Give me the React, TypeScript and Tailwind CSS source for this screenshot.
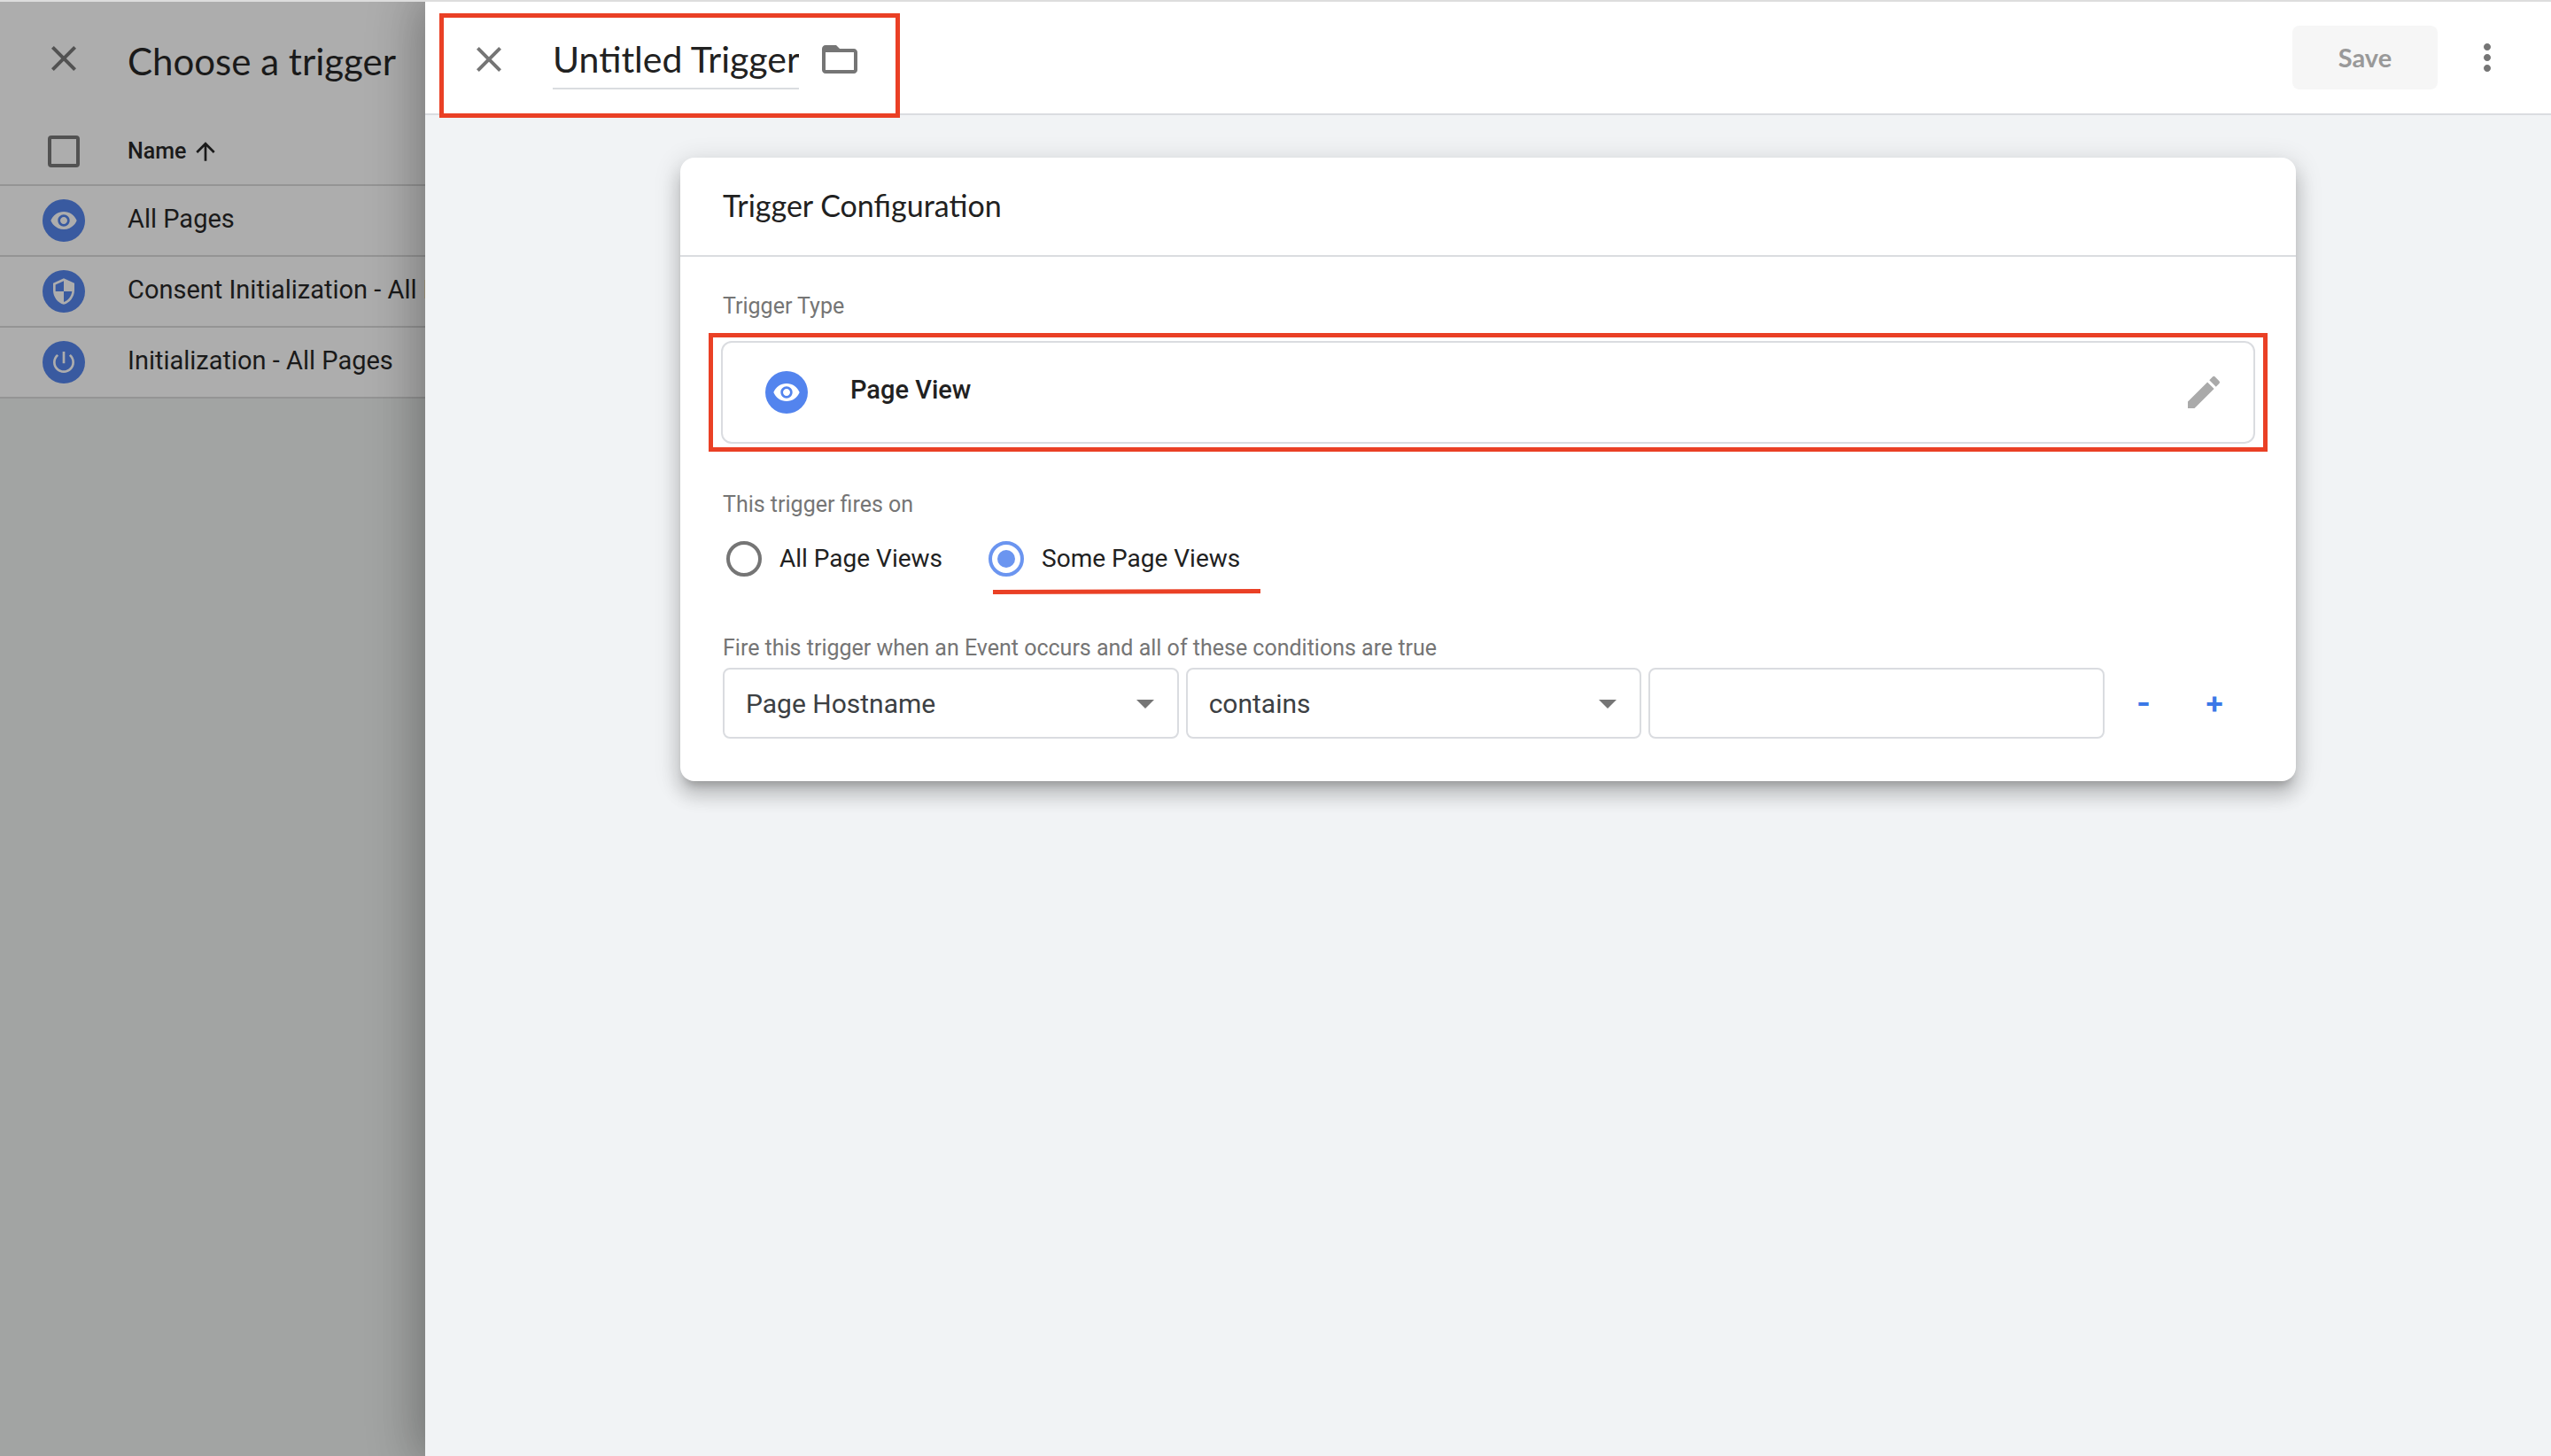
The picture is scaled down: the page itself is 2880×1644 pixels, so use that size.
import React from "react";

const GOOGLE = "font-['Google_Sans','Lato',sans-serif]";

function Icon({ d, className }: { d: string; className: string }) {
  return (
    <svg viewBox="0 0 24 24" fill="currentColor" aria-hidden="true" className={className}>
      <path d={d} />
    </svg>
  );
}

const CLOSE =
  "M19 6.41 17.59 5 12 10.59 6.41 5 5 6.41 10.59 12 5 17.59 6.41 19 12 13.41 17.59 19 19 17.59 13.41 12z";
const EYE =
  "M12 4.5C7 4.5 2.73 7.61 1 12c1.73 4.39 6 7.5 11 7.5s9.27-3.11 11-7.5c-1.73-4.39-6-7.5-11-7.5zM12 17c-2.76 0-5-2.24-5-5s2.24-5 5-5 5 2.24 5 5-2.24 5-5 5zm0-8c-1.66 0-3 1.34-3 3s1.34 3 3 3 3-1.34 3-3-1.34-3-3-3z";
const SHIELD =
  "M12 1 3 5v6c0 5.55 3.84 10.74 9 12 5.16-1.26 9-6.45 9-12V5l-9-4zm0 10.99h7c-.53 4.12-3.28 7.79-7 8.94V12H5V6.3l7-3.11v8.8z";
const POWER =
  "M13 3h-2v10h2V3zm4.83 2.17-1.42 1.42C17.99 7.86 19 9.81 19 12c0 3.87-3.13 7-7 7s-7-3.13-7-7c0-2.19 1.01-4.14 2.58-5.42L6.17 5.17C4.23 6.82 3 9.26 3 12c0 4.97 4.03 9 9 9s9-4.03 9-9c0-2.74-1.23-5.18-3.17-6.83z";
const FOLDER =
  "M20 6h-8l-2-2H4c-1.1 0-1.99.9-1.99 2L2 18c0 1.1.9 2 2 2h16c1.1 0 2-.9 2-2V8c0-1.1-.9-2-2-2zm0 12H4V8h16v10z";
const PENCIL =
  "M3 17.25V21h3.75L17.81 9.94l-3.75-3.75L3 17.25zM20.71 7.04a.996.996 0 0 0 0-1.41l-2.34-2.34a.996.996 0 0 0-1.41 0l-1.83 1.83 3.75 3.75 1.83-1.83z";
const DOTS =
  "M12 8c1.1 0 2-.9 2-2s-.9-2-2-2-2 .9-2 2 .9 2 2 2zm0 2c-1.1 0-2 .9-2 2s.9 2 2 2 2-.9 2-2-.9-2-2-2zm0 6c-1.1 0-2 .9-2 2s.9 2 2 2 2-.9 2-2-.9-2-2-2z";
const ARROW_UP = "M4 12l1.41 1.41L11 7.83V20h2V7.83l5.58 5.59L20 12l-8-8-8 8z";

const triggers = [
  { name: "All Pages", icon: EYE },
  { name: "Consent Initialization - All Pages", icon: SHIELD },
  { name: "Initialization - All Pages", icon: POWER },
];

function TriggerList() {
  return (
    <aside className="w-[480px] shrink-0 overflow-hidden bg-[#a2a4a3] text-[#1a1a1a]">
      <div className="bg-[#adadad]">
        <div className="flex h-[127px] items-center gap-12 pl-12">
          <button type="button" aria-label="Close list" className="text-[#525252]">
            <Icon d={CLOSE} className="size-12" />
          </button>
          <h2 className={`${GOOGLE} pt-1.5 text-[42px] leading-12 whitespace-nowrap`}>Choose a trigger</h2>
        </div>
        <table className="w-full border-collapse text-left">
          <thead>
            <tr className="h-20 border-b-2 border-[#949494]">
              <th className="w-24 pt-1 pl-12">
                <input
                  type="checkbox"
                  aria-label="Select all triggers"
                  className="mx-[6px] block size-9 appearance-none rounded-sm border-4 border-[#525252]"
                />
              </th>
              <th className="pt-1 pl-12 text-[25px] font-medium">
                <button type="button" className="flex items-center gap-1.5">
                  Name
                  <Icon d={ARROW_UP} className="size-8" />
                </button>
              </th>
            </tr>
          </thead>
          <tbody>
            {triggers.map((t) => (
              <tr key={t.name} className="h-20 border-b-2 border-[#949494]">
                <td className="w-24 pl-12">
                  <span className="flex size-12 items-center justify-center rounded-full bg-[#395aa0] text-[#adadad]">
                    <Icon d={t.icon} className="size-8" />
                  </span>
                </td>
                <td className="max-w-0 pb-1 pl-12 text-[29px] leading-8 whitespace-nowrap">{t.name}</td>
              </tr>
            ))}
          </tbody>
        </table>
      </div>
    </aside>
  );
}

function EditorHeader() {
  return (
    <header className="flex h-32 items-center justify-between border-b-2 border-[#dadce0] bg-white pr-12">
      <div className="relative mt-1 flex items-center pl-12">
        <button type="button" aria-label="Close editor" className="text-[#757575]">
          <Icon d={CLOSE} className="size-12" />
        </button>
        <input
          aria-label="Trigger name"
          defaultValue="Untitled Trigger"
          className={`${GOOGLE} ml-12 h-[68px] w-[278px] border-b-2 border-[#dadce0] bg-transparent text-[41px] text-[#212121] outline-none`}
        />
        <button type="button" aria-label="Choose folder" className="ml-[22px] text-[#757575]">
          <Icon d={FOLDER} className="size-12" />
        </button>
        <div className="pointer-events-none absolute -top-4.5 -right-11 -bottom-8 left-4 border-5 border-[#ea4025]" />
      </div>
      <div className="flex items-center gap-8">
        <button
          type="button"
          disabled
          className={`${GOOGLE} h-[72px] w-[164px] rounded-lg bg-[#f6f6f6] text-[29px] font-bold text-[#999999]`}
        >
          Save
        </button>
        <button type="button" aria-label="More actions" className="text-[#757575]">
          <Icon d={DOTS} className="size-12" />
        </button>
      </div>
    </header>
  );
}

function Radio({ label, checked }: { label: string; checked?: boolean }) {
  return (
    <label className="relative flex items-center gap-5">
      <input
        type="radio"
        name="fires-on"
        defaultChecked={checked}
        className="grid size-10 appearance-none place-items-center rounded-full border-4 border-[#757575] checked:border-[#6b95f0] checked:before:block checked:before:size-5 checked:before:rounded-full checked:before:bg-[#6b95f0]"
      />
      {label}
      {checked && (
        <svg
          viewBox="0 0 302 8"
          aria-hidden="true"
          className="absolute top-full left-[5px] mt-3 h-2 w-[302px]"
        >
          <path d="M0 4.5 302 3.5" stroke="#ea4025" strokeWidth="5" />
        </svg>
      )}
    </label>
  );
}

function ConditionSelect({ label, value }: { label: string; value: string }) {
  return (
    <div className="relative">
      <select
        aria-label={label}
        defaultValue={value}
        className="h-20 w-full appearance-none rounded-lg border-2 border-[#dadce0] bg-white pl-6 text-[30px] text-[#3c4043]"
      >
        <option>{value}</option>
      </select>
      <svg
        viewBox="0 0 20 10"
        fill="#757575"
        aria-hidden="true"
        className="pointer-events-none absolute top-9 right-7 h-[10px] w-5"
      >
        <path d="M0 0h20L10 10z" />
      </svg>
    </div>
  );
}

function TriggerCard() {
  return (
    <section className="rounded-2xl bg-white text-[#212121] shadow-[0_10px_10px_-6px_rgba(0,0,0,0.2),0_16px_20px_2px_rgba(0,0,0,0.14),0_6px_28px_4px_rgba(0,0,0,0.12)]">
      <h1 className={`${GOOGLE} flex h-28 items-center border-b-2 border-[#dadce0] px-12 pb-1 text-[34px]`}>
        Trigger Configuration
      </h1>
      <div className="px-12 pt-10 pb-12">
        <p className="text-[25px] leading-8 text-[#757575]">Trigger Type</p>
        <div className="-mx-4 mt-3.5 border-5 border-[#ea4025] px-[9px] py-1">
          <button
            type="button"
            className="flex h-[116px] w-full items-center rounded-xl border-2 border-[#dadce0] pr-8 pl-12 text-[29px] font-medium"
          >
            <span className="flex size-12 items-center justify-center rounded-full bg-[#5384ee] text-white">
              <Icon d={EYE} className="size-8" />
            </span>
            <span className="ml-12 pb-1">Page View</span>
            <Icon d={PENCIL} className="ml-auto size-12 text-[#aaaaaa]" />
          </button>
        </div>
        <fieldset className="mt-11 text-[28px]">
          <legend className="text-[25px] leading-8 text-[#757575]">This trigger fires on</legend>
          <div className="mt-6 flex gap-13 pl-1">
            <Radio label="All Page Views" />
            <Radio label="Some Page Views" checked />
          </div>
        </fieldset>
        <p className="mt-16 text-[25px] leading-8 text-[#757575]">
          Fire this trigger when an Event occurs and all of these conditions are true
        </p>
        <div className="mt-1.5 flex items-center">
          <div className="grid flex-1 grid-cols-3 gap-2">
            <ConditionSelect label="Variable" value="Page Hostname" />
            <ConditionSelect label="Operator" value="contains" />
            <input
              aria-label="Value"
              className="h-20 w-full rounded-lg border-2 border-[#dadce0] px-6 text-[30px] text-[#3c4043]"
            />
          </div>
          <div className="mx-1 flex font-[Inter,sans-serif] text-[34px] font-bold text-[#3b78e7]">
            <button type="button" aria-label="Remove condition" className="size-20 pb-1">
              -
            </button>
            <button type="button" aria-label="Add condition" className="size-20 pb-1">
              +
            </button>
          </div>
        </div>
      </div>
    </section>
  );
}

export default function App() {
  return (
    <div className="flex min-h-screen overflow-hidden border-t-2 border-[#dddddd] font-[Roboto,sans-serif]">
      <TriggerList />
      <div className="relative min-w-0 flex-1 bg-[#f1f3f5] shadow-[0_0_48px_4px_rgba(0,0,0,0.2),0_0_60px_10px_rgba(0,0,0,0.14)]">
        <EditorHeader />
        <main className="px-[12%] pt-12 pb-12">
          <TriggerCard />
        </main>
      </div>
    </div>
  );
}
